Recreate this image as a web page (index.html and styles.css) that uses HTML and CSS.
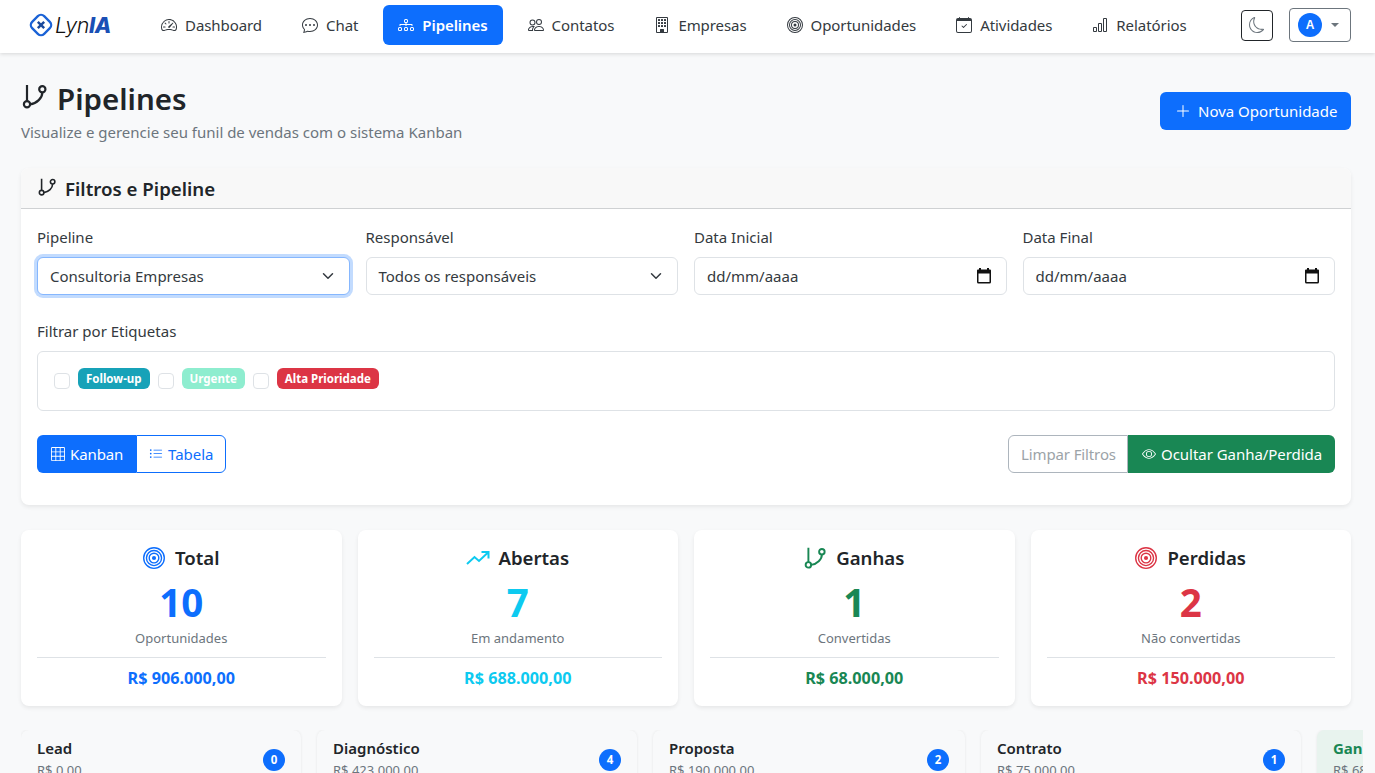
FILE: index.html
```html
<!DOCTYPE html>
<html lang="pt-BR">
<head>
<meta charset="utf-8">
<title>Pipelines</title>
<link rel="stylesheet" href="styles.css">
</head>
<body>
<svg class="sprite" xmlns="http://www.w3.org/2000/svg">
  <symbol id="i-speed" viewBox="0 0 16 16"><path d="M8 4a.5.5 0 0 1 .5.5V6a.5.5 0 0 1-1 0V4.5A.5.5 0 0 1 8 4zM3.732 5.732a.5.5 0 0 1 .707 0l.915.914a.5.5 0 1 1-.708.708l-.914-.915a.5.5 0 0 1 0-.707zM2 10a.5.5 0 0 1 .5-.5h1.586a.5.5 0 0 1 0 1H2.5A.5.5 0 0 1 2 10zm9.5 0a.5.5 0 0 1 .5-.5h1.5a.5.5 0 0 1 0 1H12a.5.5 0 0 1-.5-.5zm.754-4.246a.389.389 0 0 0-.527-.02L7.547 9.31a.91.91 0 1 0 1.302 1.258l3.434-4.297a.389.389 0 0 0-.029-.518z"/><path fill-rule="evenodd" d="M0 10a8 8 0 1 1 15.547 2.661c-.442 1.253-1.845 1.602-2.932 1.25C11.309 13.488 9.475 13 8 13c-1.474 0-3.31.488-4.615.911-1.087.352-2.49.003-2.932-1.25A7.988 7.988 0 0 1 0 10zm8-7a7 7 0 0 0-6.603 9.329c.203.575.923.876 1.68.63C4.397 12.533 6.358 12 8 12s3.604.532 4.923.96c.757.245 1.477-.056 1.68-.631A7 7 0 0 0 8 3z"/></symbol>
  <symbol id="i-chat" viewBox="0 0 16 16"><path d="M5 8a1 1 0 1 1-2 0 1 1 0 0 1 2 0zm4 0a1 1 0 1 1-2 0 1 1 0 0 1 2 0zm3 1a1 1 0 1 0 0-2 1 1 0 0 0 0 2z"/><path d="m2.165 15.803.02-.004c1.83-.363 2.948-.842 3.468-1.105A9.06 9.06 0 0 0 8 15c4.418 0 8-3.134 8-7s-3.582-7-8-7-8 3.134-8 7c0 1.76.743 3.37 1.97 4.6a10.437 10.437 0 0 1-.524 2.318l-.003.011a10.722 10.722 0 0 1-.244.637c-.079.186.074.394.273.362a21.673 21.673 0 0 0 .693-.125zm.8-3.108a1 1 0 0 0-.287-.801C1.618 10.83 1 9.468 1 8c0-3.192 3.004-6 7-6s7 2.808 7 6c0 3.193-3.004 6-7 6a8.06 8.06 0 0 1-2.088-.272 1 1 0 0 0-.711.074c-.387.196-1.24.57-2.634.893a10.97 10.97 0 0 0 .398-2z"/></symbol>
  <symbol id="i-diagram" viewBox="0 0 16 16"><path fill-rule="evenodd" d="M6 3.5A1.5 1.5 0 0 1 7.5 2h1A1.5 1.5 0 0 1 10 3.5v1A1.5 1.5 0 0 1 8.5 6v1H14a.5.5 0 0 1 .5.5v1a.5.5 0 0 1-1 0V8h-5v.5a.5.5 0 0 1-1 0V8h-5v.5a.5.5 0 0 1-1 0v-1A.5.5 0 0 1 2 7h5.5V6A1.5 1.5 0 0 1 6 4.5v-1zM8.5 5a.5.5 0 0 0 .5-.5v-1a.5.5 0 0 0-.5-.5h-1a.5.5 0 0 0-.5.5v1a.5.5 0 0 0 .5.5h1zM0 11.5A1.5 1.5 0 0 1 1.5 10h1A1.5 1.5 0 0 1 4 11.5v1A1.5 1.5 0 0 1 2.5 14h-1A1.5 1.5 0 0 1 0 12.5v-1zm1.5-.5a.5.5 0 0 0-.5.5v1a.5.5 0 0 0 .5.5h1a.5.5 0 0 0 .5-.5v-1a.5.5 0 0 0-.5-.5h-1zm4.5.5A1.5 1.5 0 0 1 7.5 10h1a1.5 1.5 0 0 1 1.5 1.5v1A1.5 1.5 0 0 1 8.5 14h-1A1.5 1.5 0 0 1 6 12.5v-1zm1.5-.5a.5.5 0 0 0-.5.5v1a.5.5 0 0 0 .5.5h1a.5.5 0 0 0 .5-.5v-1a.5.5 0 0 0-.5-.5h-1zm4.5.5a1.5 1.5 0 0 1 1.5-1.5h1a1.5 1.5 0 0 1 1.5 1.5v1a1.5 1.5 0 0 1-1.5 1.5h-1a1.5 1.5 0 0 1-1.5-1.5v-1zm1.5-.5a.5.5 0 0 0-.5.5v1a.5.5 0 0 0 .5.5h1a.5.5 0 0 0 .5-.5v-1a.5.5 0 0 0-.5-.5h-1z"/></symbol>
  <symbol id="i-people" viewBox="0 0 16 16"><path d="M15 14s1 0 1-1-1-4-5-4-5 3-5 4 1 1 1 1h8Zm-7.978-1A.261.261 0 0 1 7 12.996c.001-.264.167-1.03.76-1.72C8.312 10.629 9.282 10 11 10c1.717 0 2.687.63 3.24 1.276.593.69.758 1.457.76 1.72l-.008.002a.274.274 0 0 1-.014.002H7.022ZM11 7a2 2 0 1 0 0-4 2 2 0 0 0 0 4Zm3-2a3 3 0 1 1-6 0 3 3 0 0 1 6 0ZM6.936 9.28a5.88 5.88 0 0 0-1.23-.247A7.35 7.35 0 0 0 5 9c-4 0-5 3-5 4 0 .667.333 1 1 1h4.216A2.238 2.238 0 0 1 5 13c0-1.01.377-2.042 1.09-2.904.243-.294.526-.569.846-.816ZM4.92 10A5.493 5.493 0 0 0 4 13H1c0-.26.164-1.03.76-1.724.545-.636 1.492-1.256 3.16-1.275ZM1.5 5.5a3 3 0 1 1 6 0 3 3 0 0 1-6 0Zm3-2a2 2 0 1 0 0 4 2 2 0 0 0 0-4Z"/></symbol>
  <symbol id="i-building" viewBox="0 0 16 16"><path d="M4 2.5a.5.5 0 0 1 .5-.5h1a.5.5 0 0 1 .5.5v1a.5.5 0 0 1-.5.5h-1a.5.5 0 0 1-.5-.5v-1Zm3 0a.5.5 0 0 1 .5-.5h1a.5.5 0 0 1 .5.5v1a.5.5 0 0 1-.5.5h-1a.5.5 0 0 1-.5-.5v-1Zm3.5-.5a.5.5 0 0 0-.5.5v1a.5.5 0 0 0 .5.5h1a.5.5 0 0 0 .5-.5v-1a.5.5 0 0 0-.5-.5h-1ZM4 5.5a.5.5 0 0 1 .5-.5h1a.5.5 0 0 1 .5.5v1a.5.5 0 0 1-.5.5h-1a.5.5 0 0 1-.5-.5v-1ZM7.5 5a.5.5 0 0 0-.5.5v1a.5.5 0 0 0 .5.5h1a.5.5 0 0 0 .5-.5v-1a.5.5 0 0 0-.5-.5h-1Zm2.5.5a.5.5 0 0 1 .5-.5h1a.5.5 0 0 1 .5.5v1a.5.5 0 0 1-.5.5h-1a.5.5 0 0 1-.5-.5v-1ZM4.5 8a.5.5 0 0 0-.5.5v1a.5.5 0 0 0 .5.5h1a.5.5 0 0 0 .5-.5v-1a.5.5 0 0 0-.5-.5h-1Zm2.5.5a.5.5 0 0 1 .5-.5h1a.5.5 0 0 1 .5.5v1a.5.5 0 0 1-.5.5h-1a.5.5 0 0 1-.5-.5v-1Zm3.5-.5a.5.5 0 0 0-.5.5v1a.5.5 0 0 0 .5.5h1a.5.5 0 0 0 .5-.5v-1a.5.5 0 0 0-.5-.5h-1Z"/><path d="M2 1a1 1 0 0 1 1-1h10a1 1 0 0 1 1 1v14a1 1 0 0 1-1 1H3a1 1 0 0 1-1-1V1Zm11 0H3v14h3v-2.5a.5.5 0 0 1 .5-.5h3a.5.5 0 0 1 .5.5V15h3V1Z"/></symbol>
  <symbol id="i-bullseye" viewBox="0 0 16 16"><path d="M8 15A7 7 0 1 1 8 1a7 7 0 0 1 0 14zm0 1A8 8 0 1 0 8 0a8 8 0 0 0 0 16z"/><path d="M8 13A5 5 0 1 1 8 3a5 5 0 0 1 0 10zm0 1A6 6 0 1 0 8 2a6 6 0 0 0 0 12z"/><path d="M8 11a3 3 0 1 1 0-6 3 3 0 0 1 0 6zm0 1a4 4 0 1 0 0-8 4 4 0 0 0 0 8z"/><path d="M9.5 8a1.5 1.5 0 1 1-3 0 1.5 1.5 0 0 1 3 0z"/></symbol>
  <symbol id="i-calcheck" viewBox="0 0 16 16"><path d="M10.854 7.146a.5.5 0 0 1 0 .708l-3 3a.5.5 0 0 1-.708 0l-1.5-1.5a.5.5 0 1 1 .708-.708L7.5 9.793l2.646-2.647a.5.5 0 0 1 .708 0z"/><path d="M3.5 0a.5.5 0 0 1 .5.5V1h8V.5a.5.5 0 0 1 1 0V1h1a2 2 0 0 1 2 2v11a2 2 0 0 1-2 2H2a2 2 0 0 1-2-2V3a2 2 0 0 1 2-2h1V.5a.5.5 0 0 1 .5-.5zM1 4v10a1 1 0 0 0 1 1h12a1 1 0 0 0 1-1V4H1z"/></symbol>
  <symbol id="i-bars" viewBox="0 0 16 16"><path d="M4 11H2v3h2v-3zm5-4H7v7h2V7zm5-5v12h-2V2h2zm-2-1a1 1 0 0 0-1 1v12a1 1 0 0 0 1 1h2a1 1 0 0 0 1-1V2a1 1 0 0 0-1-1h-2zM6 7a1 1 0 0 1 1-1h2a1 1 0 0 1 1 1v7a1 1 0 0 1-1 1H7a1 1 0 0 1-1-1V7zm-5 4a1 1 0 0 1 1-1h2a1 1 0 0 1 1 1v3a1 1 0 0 1-1 1H2a1 1 0 0 1-1-1v-3z"/></symbol>
  <symbol id="i-moon" viewBox="0 0 16 16"><path d="M6 .278a.768.768 0 0 1 .08.858 7.208 7.208 0 0 0-.878 3.46c0 4.021 3.278 7.277 7.318 7.277.527 0 1.04-.055 1.533-.16a.787.787 0 0 1 .81.316.733.733 0 0 1-.031.893A8.349 8.349 0 0 1 8.344 16C3.734 16 0 12.286 0 7.71 0 4.266 2.114 1.312 5.124.06A.752.752 0 0 1 6 .278zM4.858 1.311A7.269 7.269 0 0 0 1.025 7.71c0 4.02 3.279 7.276 7.319 7.276a7.316 7.316 0 0 0 5.205-2.162c-.337.042-.68.063-1.029.063-4.61 0-8.343-3.714-8.343-8.29 0-1.167.242-2.278.681-3.286z"/></symbol>
  <symbol id="i-branch" viewBox="0 0 16 16"><g fill="none" stroke="currentColor" stroke-width="1.4"><circle cx="3.2" cy="13" r="2"/><circle cx="13" cy="3.4" r="2"/><path d="M3.2 11V.6M13 5.4C13 9 9.5 12.4 5.2 13"/></g></symbol>
  <symbol id="i-plus" viewBox="0 0 16 16"><path fill-rule="evenodd" d="M8 2a.5.5 0 0 1 .5.5v5h5a.5.5 0 0 1 0 1h-5v5a.5.5 0 0 1-1 0v-5h-5a.5.5 0 0 1 0-1h5v-5A.5.5 0 0 1 8 2Z"/></symbol>
  <symbol id="i-grid" viewBox="0 0 16 16"><path d="M0 1.5A1.5 1.5 0 0 1 1.5 0h13A1.5 1.5 0 0 1 16 1.5v13a1.5 1.5 0 0 1-1.5 1.5h-13A1.5 1.5 0 0 1 0 14.5v-13zM1.5 1a.5.5 0 0 0-.5.5V5h4V1H1.5zM5 6H1v4h4V6zm1 4h4V6H6v4zm-1 1H1v3.5a.5.5 0 0 0 .5.5H5v-4zm1 0v4h4v-4H6zm5 0v4h3.5a.5.5 0 0 0 .5-.5V11h-4zm0-1h4V6h-4v4zm0-5h4V1.5a.5.5 0 0 0-.5-.5H11v4zm-1 0V1H6v4h4z"/></symbol>
  <symbol id="i-list" viewBox="0 0 16 16"><path fill-rule="evenodd" d="M5 11.5a.5.5 0 0 1 .5-.5h9a.5.5 0 0 1 0 1h-9a.5.5 0 0 1-.5-.5zm0-4a.5.5 0 0 1 .5-.5h9a.5.5 0 0 1 0 1h-9a.5.5 0 0 1-.5-.5zm0-4a.5.5 0 0 1 .5-.5h9a.5.5 0 0 1 0 1h-9a.5.5 0 0 1-.5-.5zm-3 1a1 1 0 1 0 0-2 1 1 0 0 0 0 2zm0 4a1 1 0 1 0 0-2 1 1 0 0 0 0 2zm0 4a1 1 0 1 0 0-2 1 1 0 0 0 0 2z"/></symbol>
  <symbol id="i-eye" viewBox="0 0 16 16"><path d="M16 8s-3-5.5-8-5.5S0 8 0 8s3 5.5 8 5.5S16 8 16 8zM1.173 8a13.133 13.133 0 0 1 1.66-2.043C4.12 4.668 5.88 3.5 8 3.5c2.12 0 3.879 1.168 5.168 2.457A13.133 13.133 0 0 1 14.828 8c-.058.087-.122.183-.195.288-.335.48-.83 1.12-1.465 1.755C11.879 11.332 10.119 12.5 8 12.5c-2.12 0-3.879-1.168-5.168-2.457A13.134 13.134 0 0 1 1.172 8z"/><path d="M8 5.5a2.5 2.5 0 1 0 0 5 2.5 2.5 0 0 0 0-5zM4.5 8a3.5 3.5 0 1 1 7 0 3.5 3.5 0 0 1-7 0z"/></symbol>
  <symbol id="i-trend" viewBox="0 0 24 16"><path d="M1 14 L8.5 7 L13 11 L22 2.5 M15.5 2 H22.5 V8.5" fill="none" stroke="currentColor" stroke-width="2"/></symbol>
  <symbol id="i-chev" viewBox="0 0 16 16"><path d="m2 5 6 6 6-6" fill="none" stroke="#343a40" stroke-width="2" stroke-linecap="round" stroke-linejoin="round"/></symbol>
  <symbol id="i-cal" viewBox="0 0 16 16"><path fill-rule="evenodd" d="M3 0h2v1.5h6V0h2v1.5h1a1 1 0 0 1 1 1V14a1.5 1.5 0 0 1-1.5 1.5h-11A1.5 1.5 0 0 1 1 14V2.5a1 1 0 0 1 1-1h1V0Zm-.5 5.5V14h11V5.5h-11Z"/></symbol>
</svg>

<header class="navbar">
  <a class="brand">
    <svg class="brand-mark" viewBox="0 0 26 26"><rect x="4.5" y="4.5" width="17" height="17" rx="4.5" transform="rotate(45 13 13)" fill="none" stroke="#1a62d6" stroke-width="2.3"/><path d="M13 8.5v9M8.5 13h9" transform="rotate(45 13 13)" fill="none" stroke="#1b4a9c" stroke-width="2.4"/></svg>
    <span class="brand-text">Lyn<b>IA</b></span>
  </a>
  <nav class="nav-links">
    <a class="nav-link"><svg class="ico"><use href="#i-speed"/></svg>Dashboard</a>
    <a class="nav-link"><svg class="ico"><use href="#i-chat"/></svg>Chat</a>
    <a class="nav-link active"><svg class="ico"><use href="#i-diagram"/></svg>Pipelines</a>
    <a class="nav-link"><svg class="ico"><use href="#i-people"/></svg>Contatos</a>
    <a class="nav-link"><svg class="ico"><use href="#i-building"/></svg>Empresas</a>
    <a class="nav-link"><svg class="ico"><use href="#i-bullseye"/></svg>Oportunidades</a>
    <a class="nav-link"><svg class="ico"><use href="#i-calcheck"/></svg>Atividades</a>
    <a class="nav-link"><svg class="ico"><use href="#i-bars"/></svg>Relatórios</a>
  </nav>
  <div class="nav-tools">
    <button class="theme-btn"><svg class="ico"><use href="#i-moon"/></svg></button>
    <button class="user-btn"><span class="avatar">A</span><span class="caret"></span></button>
  </div>
</header>

<main class="page">
  <section class="page-head">
    <div>
      <h1 class="page-title"><svg class="title-ico"><use href="#i-branch"/></svg>Pipelines</h1>
      <p class="page-sub">Visualize e gerencie seu funil de vendas com o sistema Kanban</p>
    </div>
    <button class="btn btn-new"><svg class="ico"><use href="#i-plus"/></svg>Nova Oportunidade</button>
  </section>

  <section class="card filters">
    <div class="card-head"><svg class="head-ico"><use href="#i-branch"/></svg>Filtros e Pipeline</div>
    <div class="card-body">
      <div class="filter-grid">
        <div class="field"><label class="field-label">Pipeline</label><div class="control focus"><span>Consultoria Empresas</span><svg class="chev"><use href="#i-chev"/></svg></div></div>
        <div class="field"><label class="field-label">Responsável</label><div class="control"><span>Todos os responsáveis</span><svg class="chev"><use href="#i-chev"/></svg></div></div>
        <div class="field"><label class="field-label">Data Inicial</label><div class="control control-date"><span>dd/mm/aaaa</span><svg class="cal"><use href="#i-cal"/></svg></div></div>
        <div class="field"><label class="field-label">Data Final</label><div class="control control-date"><span>dd/mm/aaaa</span><svg class="cal"><use href="#i-cal"/></svg></div></div>
      </div>
      <label class="field-label tags-label">Filtrar por Etiquetas</label>
      <div class="tags">
        <span class="check"></span><span class="tag tag-teal">Follow-up</span>
        <span class="check"></span><span class="tag tag-mint">Urgente</span>
        <span class="check"></span><span class="tag tag-red">Alta Prioridade</span>
      </div>
      <div class="toolbar">
        <div class="btn-group">
          <button class="btn seg seg-on"><svg class="ico seg-ico"><use href="#i-grid"/></svg>Kanban</button>
          <button class="btn seg seg-off"><svg class="ico seg-ico"><use href="#i-list"/></svg>Tabela</button>
        </div>
        <div class="btn-group">
          <button class="btn seg seg-clear">Limpar Filtros</button>
          <button class="btn seg seg-green"><svg class="ico seg-ico"><use href="#i-eye"/></svg>Ocultar Ganha/Perdida</button>
        </div>
      </div>
    </div>
  </section>

  <section class="stats">
    <article class="card stat c-blue">
      <h3 class="stat-title"><svg class="stat-ico"><use href="#i-bullseye"/></svg><span>Total</span></h3>
      <div class="stat-num">10</div><div class="stat-sub">Oportunidades</div><hr class="stat-rule"><div class="stat-val">R$ 906.000,00</div>
    </article>
    <article class="card stat c-cyan">
      <h3 class="stat-title title-trend"><svg class="stat-ico trend"><use href="#i-trend"/></svg><span>Abertas</span></h3>
      <div class="stat-num">7</div><div class="stat-sub">Em andamento</div><hr class="stat-rule"><div class="stat-val">R$ 688.000,00</div>
    </article>
    <article class="card stat c-green">
      <h3 class="stat-title"><svg class="stat-ico"><use href="#i-branch"/></svg><span>Ganhas</span></h3>
      <div class="stat-num">1</div><div class="stat-sub">Convertidas</div><hr class="stat-rule"><div class="stat-val">R$ 68.000,00</div>
    </article>
    <article class="card stat c-red">
      <h3 class="stat-title"><svg class="stat-ico"><use href="#i-bullseye"/></svg><span>Perdidas</span></h3>
      <div class="stat-num">2</div><div class="stat-sub">Não convertidas</div><hr class="stat-rule"><div class="stat-val">R$ 150.000,00</div>
    </article>
  </section>

  <section class="kanban">
    <div class="col col-lead"><div><div class="col-name">Lead</div><div class="col-val">R$ 0,00</div></div><span class="count">0</span></div>
    <div class="col col-diag"><div><div class="col-name">Diagnóstico</div><div class="col-val">R$ 423.000,00</div></div><span class="count">4</span></div>
    <div class="col col-prop"><div><div class="col-name">Proposta</div><div class="col-val">R$ 190.000,00</div></div><span class="count">2</span></div>
    <div class="col col-cont"><div><div class="col-name">Contrato</div><div class="col-val">R$ 75.000,00</div></div><span class="count">1</span></div>
    <div class="col col-won"><div><div class="col-name won-name">Ganha</div><div class="col-val">R$ 68.000,00</div></div><span class="count">1</span></div>
  </section>
</main>
</body>
</html>
```
FILE: styles.css
```css
* { box-sizing: border-box; }
html, body { height: 100%; }
body {
  margin: 0;
  height: 100vh;
  overflow: hidden;
  background: #f8f9fa;
  color: #212529;
  font-family: "Noto Sans", "Open Sans", sans-serif;
  font-size: 15px;
  line-height: 24px;
}
.sprite { display: none; }
.ico { width: 16px; height: 16px; fill: currentColor; flex: none; }

/* navbar */
.navbar {
  height: 53px;
  display: flex;
  align-items: center;
  padding: 0 24px 3px 28px;
  background: #fff;
  box-shadow: 0 1px 4px rgba(0, 0, 0, .14);
  position: relative;
}
.brand { display: flex; align-items: center; width: 118px; flex: none; }
.brand-mark { width: 26px; height: 26px; flex: none; }
.brand-text { font-family: "Inter", "Noto Sans", sans-serif; font-size: 21.5px; font-style: italic; font-weight: 300; color: #111; margin-left: 1px; letter-spacing: -.4px; }
.brand-text b { font-weight: 800; color: #1a4fb5; }
.nav-links { display: flex; gap: 10px; align-items: center; letter-spacing: -.07px; }
.nav-link {
  height: 40px;
  padding: 0 15px;
  display: flex;
  align-items: center;
  gap: 8px;
  color: #343a40;
  border-radius: 6px;
  white-space: nowrap;
}
.nav-link.active { background: #0d6efd; color: #fff; font-weight: 600; }
.nav-tools { margin-left: auto; display: flex; align-items: center; gap: 16px; }
.theme-btn {
  width: 32px; height: 31px; padding: 0;
  display: flex; align-items: center; justify-content: center;
  background: #fff; border: 1px solid #212529; border-radius: 4px; color: #6c757d;
}
.user-btn {
  width: 62px; height: 34px; padding: 0 8px;
  display: flex; align-items: center; justify-content: space-between;
  background: #fff; border: 1px solid #6c757d; border-radius: 4px;
}
.avatar {
  width: 24px; height: 24px; border-radius: 50%;
  background: #0d6efd; color: #fff;
  font-size: 12px; font-weight: 700; line-height: 24px; text-align: center;
}
.caret { width: 0; height: 0; border: 4.5px solid transparent; border-top-color: #6c757d; border-bottom: 0; margin-right: 3px; }

/* page */
.page { padding: 24px 24px 0 21px; }
.page-head { display: flex; justify-content: space-between; align-items: center; margin-bottom: 24px; }
.page-title { margin: 0; display: flex; align-items: center; font-size: 29.5px; line-height: 44px; font-weight: 600; }
.title-ico { width: 25px; height: 25px; margin: 0 10px 5px 1px; }
.page-sub { margin: -1px 0 0; color: #6c757d; }

.btn {
  height: 38px;
  display: inline-flex;
  align-items: center;
  font: inherit;
  border: 1px solid transparent;
  border-radius: 6px;
  white-space: nowrap;
}
.btn-new { width: 191px; padding: 0 12px 0 14px; gap: 7px; background: #0d6efd; color: #fff; justify-content: flex-start; }

.card { background: #fff; border-radius: 8px; box-shadow: 0 2px 4px rgba(0, 0, 0, .075); }
.card-head {
  height: 41px;
  display: flex;
  align-items: center;
  padding: 1px 16px 0 17px;
  background: #f8f8f8;
  border-bottom: 1px solid #cfd1d3;
  border-radius: 8px 8px 0 0;
  font-size: 18.7px;
  font-weight: 600;
}
.head-ico { width: 18px; height: 18px; margin-right: 9px; margin-bottom: 4px; }
.card-body { padding: 16px 16px 32px; }

.filter-grid { display: grid; grid-template-columns: repeat(4, 1fr); gap: 16px; }
.field-label { display: block; margin-bottom: 8px; color: #343a40; }
.control {
  height: 38px;
  display: flex; align-items: center; justify-content: space-between;
  padding: 0 15px 0 12px;
  border: 1px solid #dee2e6; border-radius: 6px;
  background: #fff; color: #343a40;
}
.control-date { padding-right: 14px; }
.control.focus { border-color: #86b7fe; box-shadow: 0 0 0 3px rgba(13, 110, 253, .25); }
.chev { width: 12px; height: 12px; }
.cal { width: 16px; height: 16px; fill: #111; }

.tags-label { margin-top: 24px; }
.tags {
  height: 60px;
  display: flex; align-items: center;
  padding: 0 16px;
  border: 1px solid #dee2e6; border-radius: 6px;
}
.check { width: 16px; height: 16px; border: 1px solid #dee2e6; border-radius: 4px; background: #fff; margin: 0 8px 0 0; flex: none; }
.tag {
  height: 21px; margin: -5px 8px 0 0; padding: 0 8px;
  display: flex; align-items: center;
  border-radius: 6px; color: #fff;
  font-size: 11.5px; font-weight: 700; line-height: 21px;
}
.tag-teal { background: #17a2b8; }
.tag-mint { background: #8eedcf; }
.tag-red { background: #dc3545; }

.toolbar { display: flex; justify-content: space-between; margin-top: 24px; }
.btn-group { display: flex; }
.seg { border-radius: 0; padding: 0 0 0 12px; gap: 5px; }
.seg:first-child { border-radius: 6px 0 0 6px; }
.seg:last-child { border-radius: 0 6px 6px 0; }
.seg-ico { width: 14px; height: 14px; }
.seg-on { width: 99px; padding-left: 13px; background: #0d6efd; color: #fff; letter-spacing: -.1px; }
.seg-off { width: 90px; background: #fff; color: #0d6efd; border-color: #0d6efd; }
.seg-clear { width: 120px; background: #fff; color: #9ca3a8; border-color: #adb5bd; letter-spacing: -.12px; }
.seg-green { width: 207px; padding-left: 13px; background: #198754; color: #fff; letter-spacing: -.04px; }

/* stats */
.stats { display: grid; grid-template-columns: repeat(4, 1fr); gap: 16px; margin-top: 25px; }
.stat { height: 176px; padding: 16px; text-align: center; }
.stat-title {
  margin: 0; display: flex; align-items: center; justify-content: center; gap: 10px;
  font-size: 18.6px; line-height: 24px; font-weight: 600; color: #212529;
}
.title-trend { gap: 8px; }
.stat-ico { width: 22px; height: 22px; fill: currentColor; }
.stat-ico.trend { width: 24px; height: 16px; }
.stat-num { margin-top: 8px; font-size: 38.5px; line-height: 48px; font-weight: 700; }
.stat-sub { margin-top: 2px; font-size: 13px; line-height: 21px; color: #6c757d; }
.stat-rule { margin: 8px 0 8px; border: 0; border-top: 1px solid #dee2e6; }
.stat-val { font-size: 16.2px; line-height: 24px; font-weight: 700; }
.c-blue .stat-ico, .c-blue .stat-num, .c-blue .stat-val { color: #0d6efd; }
.c-cyan .stat-ico, .c-cyan .stat-num, .c-cyan .stat-val { color: #0dcaf0; }
.c-green .stat-ico, .c-green .stat-num, .c-green .stat-val { color: #198754; }
.c-red .stat-ico, .c-red .stat-num, .c-red .stat-val { color: #dc3545; }

/* kanban */
.kanban { display: flex; gap: 16px; margin: 24px -12px 0 0; overflow: hidden; height: 120px; }
.col {
  height: 110px; flex: none;
  display: flex; justify-content: space-between; align-items: flex-start;
  padding: 6px 16px;
  background: #f8f9fa; border-radius: 8px 8px 0 0;
  box-shadow: 0 0 3px rgba(0, 0, 0, .08);
}
.col-lead { width: 280px; }
.col-diag { width: 320px; }
.col-prop { width: 312px; }
.col-cont { width: 320px; }
.col-won { width: 320px; background: #e8f3ee; }
.col-name { font-weight: 600; }
.won-name { color: #198754; font-weight: 700; }
.col-val { font-size: 13px; line-height: 21px; color: #6c757d; }
.count {
  width: 22px; height: 22px; margin-top: 13px; border-radius: 50%;
  background: #0d6efd; color: #fff;
  font-size: 11.5px; font-weight: 700; line-height: 22px; text-align: center;
}
```
